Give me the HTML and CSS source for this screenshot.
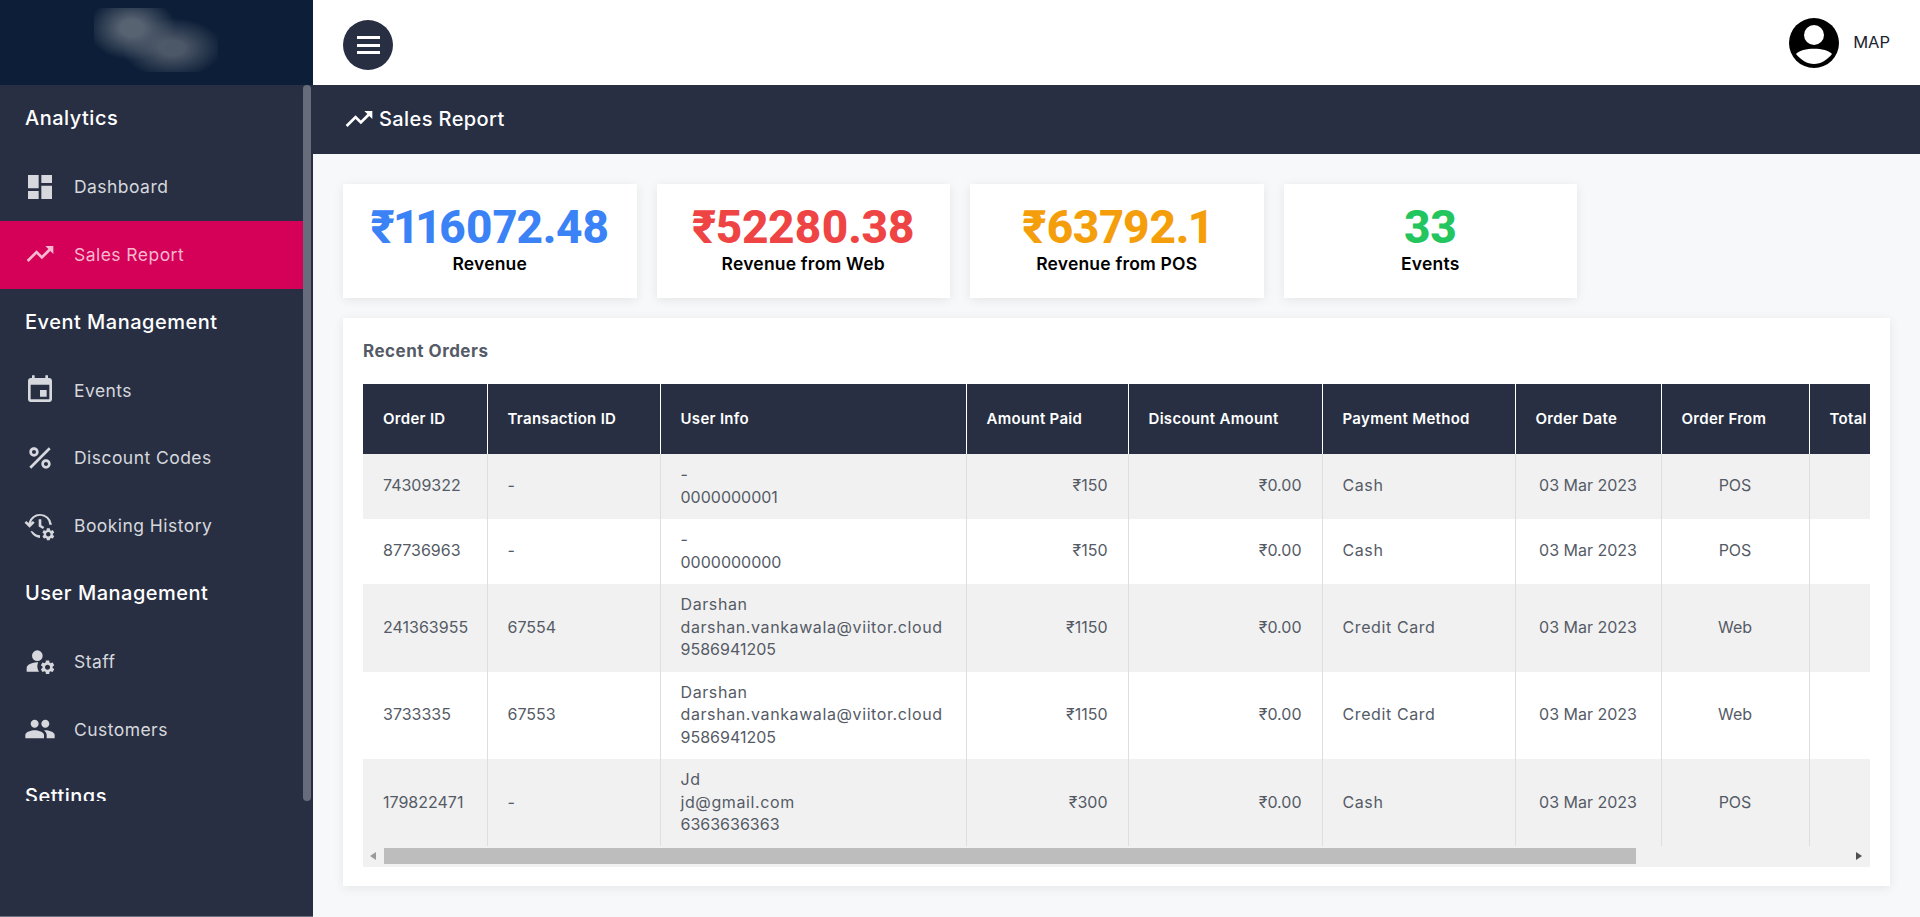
FILE: index.html
```html
<!DOCTYPE html>
<html>

<head>
    <title>Sales Report</title>
    <link rel="stylesheet" href="styles.css">
</head>

<body>
    <div class="layout">
        <aside class="sidebar">
            <div class="logo-bar">
                <div class="logo-blur"></div>
            </div>
            <div class="nav-wrap">
                <ul class="nav">
                    <li class="nav-title">Analytics</li>
                    <li class="nav-item">
                        <svg class="nav-icon" viewBox="0 0 24 24"><path d="M3 13h8V3H3v10zm0 8h8v-6H3v6zm10 0h8V11h-8v10zm0-18v6h8V3h-8z"/></svg>
                        <span>Dashboard</span>
                    </li>
                    <li class="nav-item active">
                        <svg class="nav-icon" viewBox="0 0 24 24"><path d="M16 6l2.29 2.29-4.88 4.88-4-4L2 16.59 3.41 18l6-6 4 4 6.3-6.29L22 12V6z"/></svg>
                        <span>Sales Report</span>
                    </li>
                    <li class="nav-title">Event Management</li>
                    <li class="nav-item">
                        <svg class="nav-icon" viewBox="0 0 24 24"><path d="M17 12h-5v5h5v-5zM16 1v2H8V1H6v2H5c-1.11 0-1.99.9-1.99 2L3 19c0 1.1.89 2 2 2h14c1.1 0 2-.9 2-2V5c0-1.1-.9-2-2-2h-1V1h-2zm3 18H5V8h14v11z"/></svg>
                        <span>Events</span>
                    </li>
                    <li class="nav-item">
                        <svg class="nav-icon" viewBox="0 0 24 24"><path d="M7.5 11C9.43 11 11 9.43 11 7.5S9.43 4 7.5 4 4 5.57 4 7.5 5.57 11 7.5 11zm0-5C8.33 6 9 6.67 9 7.5S8.33 9 7.5 9 6 8.33 6 7.5 6.67 6 7.5 6zM4.0025 18.5831 18.5875 3.9981l1.4142 1.4142L5.4167 19.9973zM16.5 13c-1.93 0-3.5 1.57-3.5 3.5s1.57 3.5 3.5 3.5 3.5-1.57 3.5-3.5-1.57-3.5-3.5-3.5zm0 5c-.83 0-1.5-.67-1.5-1.5s.67-1.5 1.5-1.5 1.5.67 1.5 1.5-.67 1.5-1.5 1.5z"/></svg>
                        <span>Discount Codes</span>
                    </li>
                    <li class="nav-item">
                        <svg class="nav-icon" viewBox="0 0 24 24">
                            <path d="M12 3a9 9 0 0 0-8.700 6.700L1.800 8.200.4 9.600 4.200 13.400 8 9.600 6.600 8.200 5.200 9.600A7 7 0 0 1 19 11h2A9 9 0 0 0 12 3zM4.800 15.800A9 9 0 0 0 12 21v-2a7 7 0 0 1-5.400-2.800zM11 7v5.400l3.200 1.900 1-1.600-2.200-1.300V7z"/>
                            <path transform="translate(12.600 12.600) scale(.47)" d="M19.14 12.94c.04-.3.06-.61.06-.94 0-.32-.02-.64-.07-.94l2.03-1.58c.18-.14.23-.41.12-.61l-1.92-3.32c-.12-.22-.37-.29-.59-.22l-2.39.96c-.5-.38-1.03-.7-1.62-.94l-.36-2.54c-.04-.24-.24-.41-.48-.41h-3.84c-.24 0-.43.17-.47.41l-.36 2.54c-.59.24-1.13.57-1.62.94l-2.39-.96c-.22-.08-.47 0-.59.22L2.74 8.87c-.12.21-.08.47.12.61l2.03 1.58c-.05.3-.09.63-.09.94s.02.64.07.94l-2.03 1.58c-.18.14-.23.41-.12.61l1.92 3.32c.12.22.37.29.59.22l2.39-.96c.5.38 1.03.7 1.62.94l.36 2.54c.05.24.24.41.48.41h3.84c.24 0 .44-.17.47-.41l.36-2.54c.59-.24 1.13-.56 1.62-.94l2.39.96c.22.08.47 0 .59-.22l1.92-3.32c.12-.22.07-.47-.12-.61l-2.01-1.58zM12 15.6c-1.98 0-3.6-1.62-3.6-3.6s1.62-3.6 3.6-3.6 3.6 1.62 3.6 3.6-1.62 3.6-3.6 3.6z"/>
                        </svg>
                        <span>Booking History</span>
                    </li>
                    <li class="nav-title">User Management</li>
                    <li class="nav-item">
                        <svg class="nav-icon" viewBox="0 0 24 24">
                            <circle cx="10" cy="8" r="4"/>
                            <path d="M10.67 13.02C10.45 13.01 10.23 13 10 13c-2.42 0-4.68.67-6.61 1.82-.88.52-1.39 1.5-1.39 2.53V20h9.26c-.79-1.13-1.26-2.51-1.26-4 0-1.07.25-2.07.67-2.98z"/>
                            <path transform="translate(11.300 10.300) scale(.53)" d="M19.14 12.94c.04-.3.06-.61.06-.94 0-.32-.02-.64-.07-.94l2.03-1.58c.18-.14.23-.41.12-.61l-1.92-3.32c-.12-.22-.37-.29-.59-.22l-2.39.96c-.5-.38-1.03-.7-1.62-.94l-.36-2.54c-.04-.24-.24-.41-.48-.41h-3.84c-.24 0-.43.17-.47.41l-.36 2.54c-.59.24-1.13.57-1.62.94l-2.39-.96c-.22-.08-.47 0-.59.22L2.74 8.87c-.12.21-.08.47.12.61l2.03 1.58c-.05.3-.09.63-.09.94s.02.64.07.94l-2.03 1.58c-.18.14-.23.41-.12.61l1.92 3.32c.12.22.37.29.59.22l2.39-.96c.5.38 1.03.7 1.62.94l.36 2.54c.05.24.24.41.48.41h3.84c.24 0 .44-.17.47-.41l.36-2.54c.59-.24 1.13-.56 1.62-.94l2.39.96c.22.08.47 0 .59-.22l1.92-3.32c.12-.22.07-.47-.12-.61l-2.01-1.58zM12 15.6c-1.98 0-3.6-1.62-3.6-3.6s1.62-3.6 3.6-3.6 3.6 1.62 3.6 3.6-1.62 3.6-3.6 3.6z"/>
                        </svg>
                        <span>Staff</span>
                    </li>
                    <li class="nav-item">
                        <svg class="nav-icon" viewBox="0 0 24 24"><path d="M16 11c1.66 0 2.99-1.34 2.99-3S17.66 5 16 5c-1.66 0-3 1.34-3 3s1.34 3 3 3zm-8 0c1.66 0 2.99-1.34 2.99-3S9.66 5 8 5C6.34 5 5 6.34 5 8s1.34 3 3 3zm0 2c-2.33 0-7 1.17-7 3.5V19h14v-2.5c0-2.33-4.67-3.5-7-3.5zm8 0c-.29 0-.62.02-.97.05 1.16.84 1.97 1.97 1.97 3.45V19h6v-2.5c0-2.33-4.67-3.5-7-3.5z"/></svg>
                        <span>Customers</span>
                    </li>
                    <li class="nav-title">Settings</li>
                </ul>
                <div class="nav-scroll"></div>
            </div>
        </aside>

        <div class="main">
            <header class="topbar">
                <button class="menu-btn">
                    <span></span>
                    <span></span>
                    <span></span>
                </button>
                <div class="user">
                    <svg class="avatar" viewBox="0 0 50 50">
                        <circle cx="25" cy="25" r="25" fill="#000"/>
                        <circle cx="25" cy="17" r="10" fill="#fff"/>
                        <path d="M7 36C13 29 37 29 43 36C38 42 32 46 25 46C18 46 12 42 7 36z" fill="#fff"/>
                    </svg>
                    <span class="user-name">MAP</span>
                </div>
            </header>

            <div class="page-title">
                <svg class="page-icon" viewBox="0 0 24 24"><path d="M16 6l2.29 2.29-4.88 4.88-4-4L2 16.59 3.41 18l6-6 4 4 6.3-6.29L22 12V6z"/></svg>
                <span>Sales Report</span>
            </div>

            <div class="content">
                <div class="cards">
                    <div class="card">
                        <div class="card-value blue">₹116072.48</div>
                        <div class="card-label">Revenue</div>
                    </div>
                    <div class="card">
                        <div class="card-value red">₹52280.38</div>
                        <div class="card-label">Revenue from Web</div>
                    </div>
                    <div class="card">
                        <div class="card-value orange">₹63792.1</div>
                        <div class="card-label">Revenue from POS</div>
                    </div>
                    <div class="card">
                        <div class="card-value green">33</div>
                        <div class="card-label">Events</div>
                    </div>
                </div>

                <div class="panel">
                    <h2 class="panel-title">Recent Orders</h2>
                    <div class="table-wrap">
                        <table class="orders">
                            <thead>
                                <tr>
                                    <th>Order ID</th>
                                    <th>Transaction ID</th>
                                    <th>User Info</th>
                                    <th>Amount Paid</th>
                                    <th>Discount Amount</th>
                                    <th>Payment Method</th>
                                    <th>Order Date</th>
                                    <th>Order From</th>
                                    <th>Total Tickets</th>
                                </tr>
                            </thead>
                            <tbody>
                                <tr>
                                    <td>74309322</td>
                                    <td>-</td>
                                    <td>-<br>0000000001</td>
                                    <td class="right">₹150</td>
                                    <td class="right">₹0.00</td>
                                    <td class="wide">Cash</td>
                                    <td class="center">03 Mar 2023</td>
                                    <td class="center">POS</td>
                                    <td></td>
                                </tr>
                                <tr>
                                    <td>87736963</td>
                                    <td>-</td>
                                    <td>-<br>0000000000</td>
                                    <td class="right">₹150</td>
                                    <td class="right">₹0.00</td>
                                    <td class="wide">Cash</td>
                                    <td class="center">03 Mar 2023</td>
                                    <td class="center">POS</td>
                                    <td></td>
                                </tr>
                                <tr>
                                    <td>241363955</td>
                                    <td>67554</td>
                                    <td><span class="wide">Darshan<br>darshan.vankawala@viitor.cloud</span><br>9586941205</td>
                                    <td class="right">₹1150</td>
                                    <td class="right">₹0.00</td>
                                    <td class="wide">Credit Card</td>
                                    <td class="center">03 Mar 2023</td>
                                    <td class="center">Web</td>
                                    <td></td>
                                </tr>
                                <tr>
                                    <td>3733335</td>
                                    <td>67553</td>
                                    <td><span class="wide">Darshan<br>darshan.vankawala@viitor.cloud</span><br>9586941205</td>
                                    <td class="right">₹1150</td>
                                    <td class="right">₹0.00</td>
                                    <td class="wide">Credit Card</td>
                                    <td class="center">03 Mar 2023</td>
                                    <td class="center">Web</td>
                                    <td></td>
                                </tr>
                                <tr>
                                    <td>179822471</td>
                                    <td>-</td>
                                    <td><span class="wide">Jd<br>jd@gmail.com</span><br>6363636363</td>
                                    <td class="right">₹300</td>
                                    <td class="right">₹0.00</td>
                                    <td class="wide">Cash</td>
                                    <td class="center">03 Mar 2023</td>
                                    <td class="center">POS</td>
                                    <td></td>
                                </tr>
                            </tbody>
                        </table>
                    </div>
                    <div class="hscroll">
                        <span class="arrow-left"></span>
                        <div class="hscroll-thumb"></div>
                        <span class="arrow-right"></span>
                    </div>
                </div>
            </div>
        </div>
    </div>
</body>

</html>
```

FILE: styles.css
```css
* {
    box-sizing: border-box;
}

html,
body {
    margin: 0;
    height: 100%;
    overflow: hidden;
}

body {
    font-family: Inter, "Noto Sans", sans-serif;
    color: #555b66;
}

.layout {
    display: flex;
    height: 917px;
}

/* sidebar */
.sidebar {
    width: 313px;
    flex-shrink: 0;
    background: #282f43;
    border-bottom: 1px solid #6d7280;
}

.logo-bar {
    height: 85px;
    background: #0d1f38;
    display: flex;
    justify-content: center;
    padding-top: 8px;
}

.logo-blur {
    width: 124px;
    height: 64px;
    margin-left: -2px;
    background:
        radial-gradient(ellipse 44px 32px at 38px 20px, rgba(88, 99, 114, 1) 25%, rgba(88, 99, 114, 0) 100%),
        radial-gradient(ellipse 50px 30px at 78px 40px, rgba(76, 87, 103, 1) 25%, rgba(76, 87, 103, 0) 100%);
}

.nav-wrap {
    display: flex;
    height: 716px;
}

.nav {
    list-style: none;
    margin: 0;
    padding: 0.5px 0 0;
    width: 303px;
    overflow: hidden;
}

.nav-title {
    height: 67.8px;
    display: flex;
    align-items: center;
    padding: 0 0 2px 25px;
    font-size: 20px;
    letter-spacing: 0.5px;
    font-weight: 500;
    color: #fff;
}

.nav-item {
    height: 67.8px;
    display: flex;
    align-items: center;
    gap: 18px;
    padding: 0 0 1px 24px;
    font-size: 17.5px;
    letter-spacing: 0.45px;
    color: #d6d8dd;
}

.nav-item.active {
    background: #d50057;
    color: #f7b8d0;
}

.nav-icon {
    width: 32px;
    height: 32px;
    fill: currentColor;
    flex-shrink: 0;
}

.nav-scroll {
    width: 8px;
    background: #666c7a;
    border-radius: 4px;
}

/* top */
.main {
    flex: 1;
    min-width: 0;
    background: #f7f8fa;
}

.topbar {
    height: 85px;
    background: #fff;
    display: flex;
    justify-content: space-between;
    align-items: center;
    padding: 5px 30px 0 30px;
}

.menu-btn {
    width: 50px;
    height: 50px;
    border: none;
    padding: 0;
    border-radius: 50%;
    background: #282f43;
    display: flex;
    flex-direction: column;
    align-items: center;
    justify-content: center;
    gap: 4.5px;
}

.menu-btn span {
    width: 23px;
    height: 3px;
    background: #fff;
}

.user {
    display: flex;
    align-items: center;
    gap: 14px;
    margin-top: -5px;
}

.avatar {
    width: 50px;
    height: 50px;
}

.user-name {
    font-size: 16.5px;
    color: #1b2430;
    margin-top: -2px;
}

.page-title {
    height: 69px;
    background: #282f43;
    display: flex;
    align-items: center;
    gap: 4px;
    padding: 0 0 1px 30px;
    font-size: 20px;
    letter-spacing: 0.4px;
    font-weight: 500;
    color: #fff;
}

.page-icon {
    width: 32px;
    height: 32px;
    fill: #fff;
}

/* cards */
.content {
    padding: 30px 30px 0;
}

.cards {
    display: flex;
    gap: 20px;
}

.card {
    width: 293.5px;
    height: 114px;
    background: #fff;
    box-shadow: 0 2px 10px rgba(0, 0, 0, 0.08);
    display: flex;
    flex-direction: column;
    align-items: center;
    padding-top: 18px;
}

.card-value {
    font-family: Roboto, sans-serif;
    font-size: 46px;
    font-weight: 800;
    line-height: 50px;
    letter-spacing: -0.4px;
    font-variant-numeric: proportional-nums;
}

.card-label {
    font-size: 17.5px;
    letter-spacing: 0.2px;
    font-weight: 600;
    color: #000;
    line-height: 22px;
    margin-top: 1px;
}

.blue {
    color: #3b82f6;
}

.red {
    color: #ef4444;
}

.orange {
    color: #f59e0b;
}

.green {
    color: #22c55e;
}

/* table */
.panel {
    margin-top: 20px;
    height: 568px;
    background: #fff;
    box-shadow: 0 2px 10px rgba(0, 0, 0, 0.08);
    padding: 20px;
}

.panel-title {
    margin: 0;
    height: 46px;
    font-size: 17px;
    letter-spacing: 0.5px;
    font-weight: 700;
    line-height: 26px;
    color: #555b66;
}

.table-wrap {
    overflow: hidden;
    height: 462px;
}

.orders {
    width: 1773px;
    table-layout: fixed;
    border-collapse: collapse;
    font-size: 16px;
    line-height: 22.5px;
}

.orders th {
    height: 70px;
    background: #282f43;
    color: #fff;
    font-size: 15px;
    letter-spacing: 0.3px;
    font-weight: 600;
    text-align: left;
    padding: 0 20px;
    border-left: 1px solid #fff;
    white-space: nowrap;
}

.orders td {
    padding: 9px 20px 11px;
    border-left: 1px solid #dedede;
    white-space: nowrap;
}

.orders th:first-child,
.orders td:first-child {
    border-left: none;
}

.orders tbody tr:nth-child(odd) {
    background: #f1f1f1;
}

.orders th:nth-child(1) { width: 124px; }
.orders th:nth-child(2) { width: 173px; }
.orders th:nth-child(3) { width: 306px; }
.orders th:nth-child(4) { width: 162px; }
.orders th:nth-child(5) { width: 194px; }
.orders th:nth-child(6) { width: 193px; }
.orders th:nth-child(7) { width: 146px; }
.orders th:nth-child(8) { width: 148px; }

.wide {
    letter-spacing: 0.6px;
}

.right {
    text-align: right;
}

.center {
    text-align: center;
}

.hscroll {
    height: 21px;
    background: #f1f1f1;
    display: flex;
    align-items: flex-start;
    padding: 2px 8px 0 7px;
}

.hscroll-thumb {
    width: 1252px;
    height: 16px;
    margin-left: 8px;
    background: #bdbdbd;
}

.arrow-left {
    width: 0;
    height: 0;
    margin-top: 4px;
    border-style: solid;
    border-width: 4px 6px 4px 0;
    border-color: transparent #9a9a9a transparent transparent;
}

.arrow-right {
    width: 0;
    height: 0;
    margin-top: 4px;
    margin-left: auto;
    border-style: solid;
    border-width: 4px 0 4px 6px;
    border-color: transparent transparent transparent #505050;
}
```
